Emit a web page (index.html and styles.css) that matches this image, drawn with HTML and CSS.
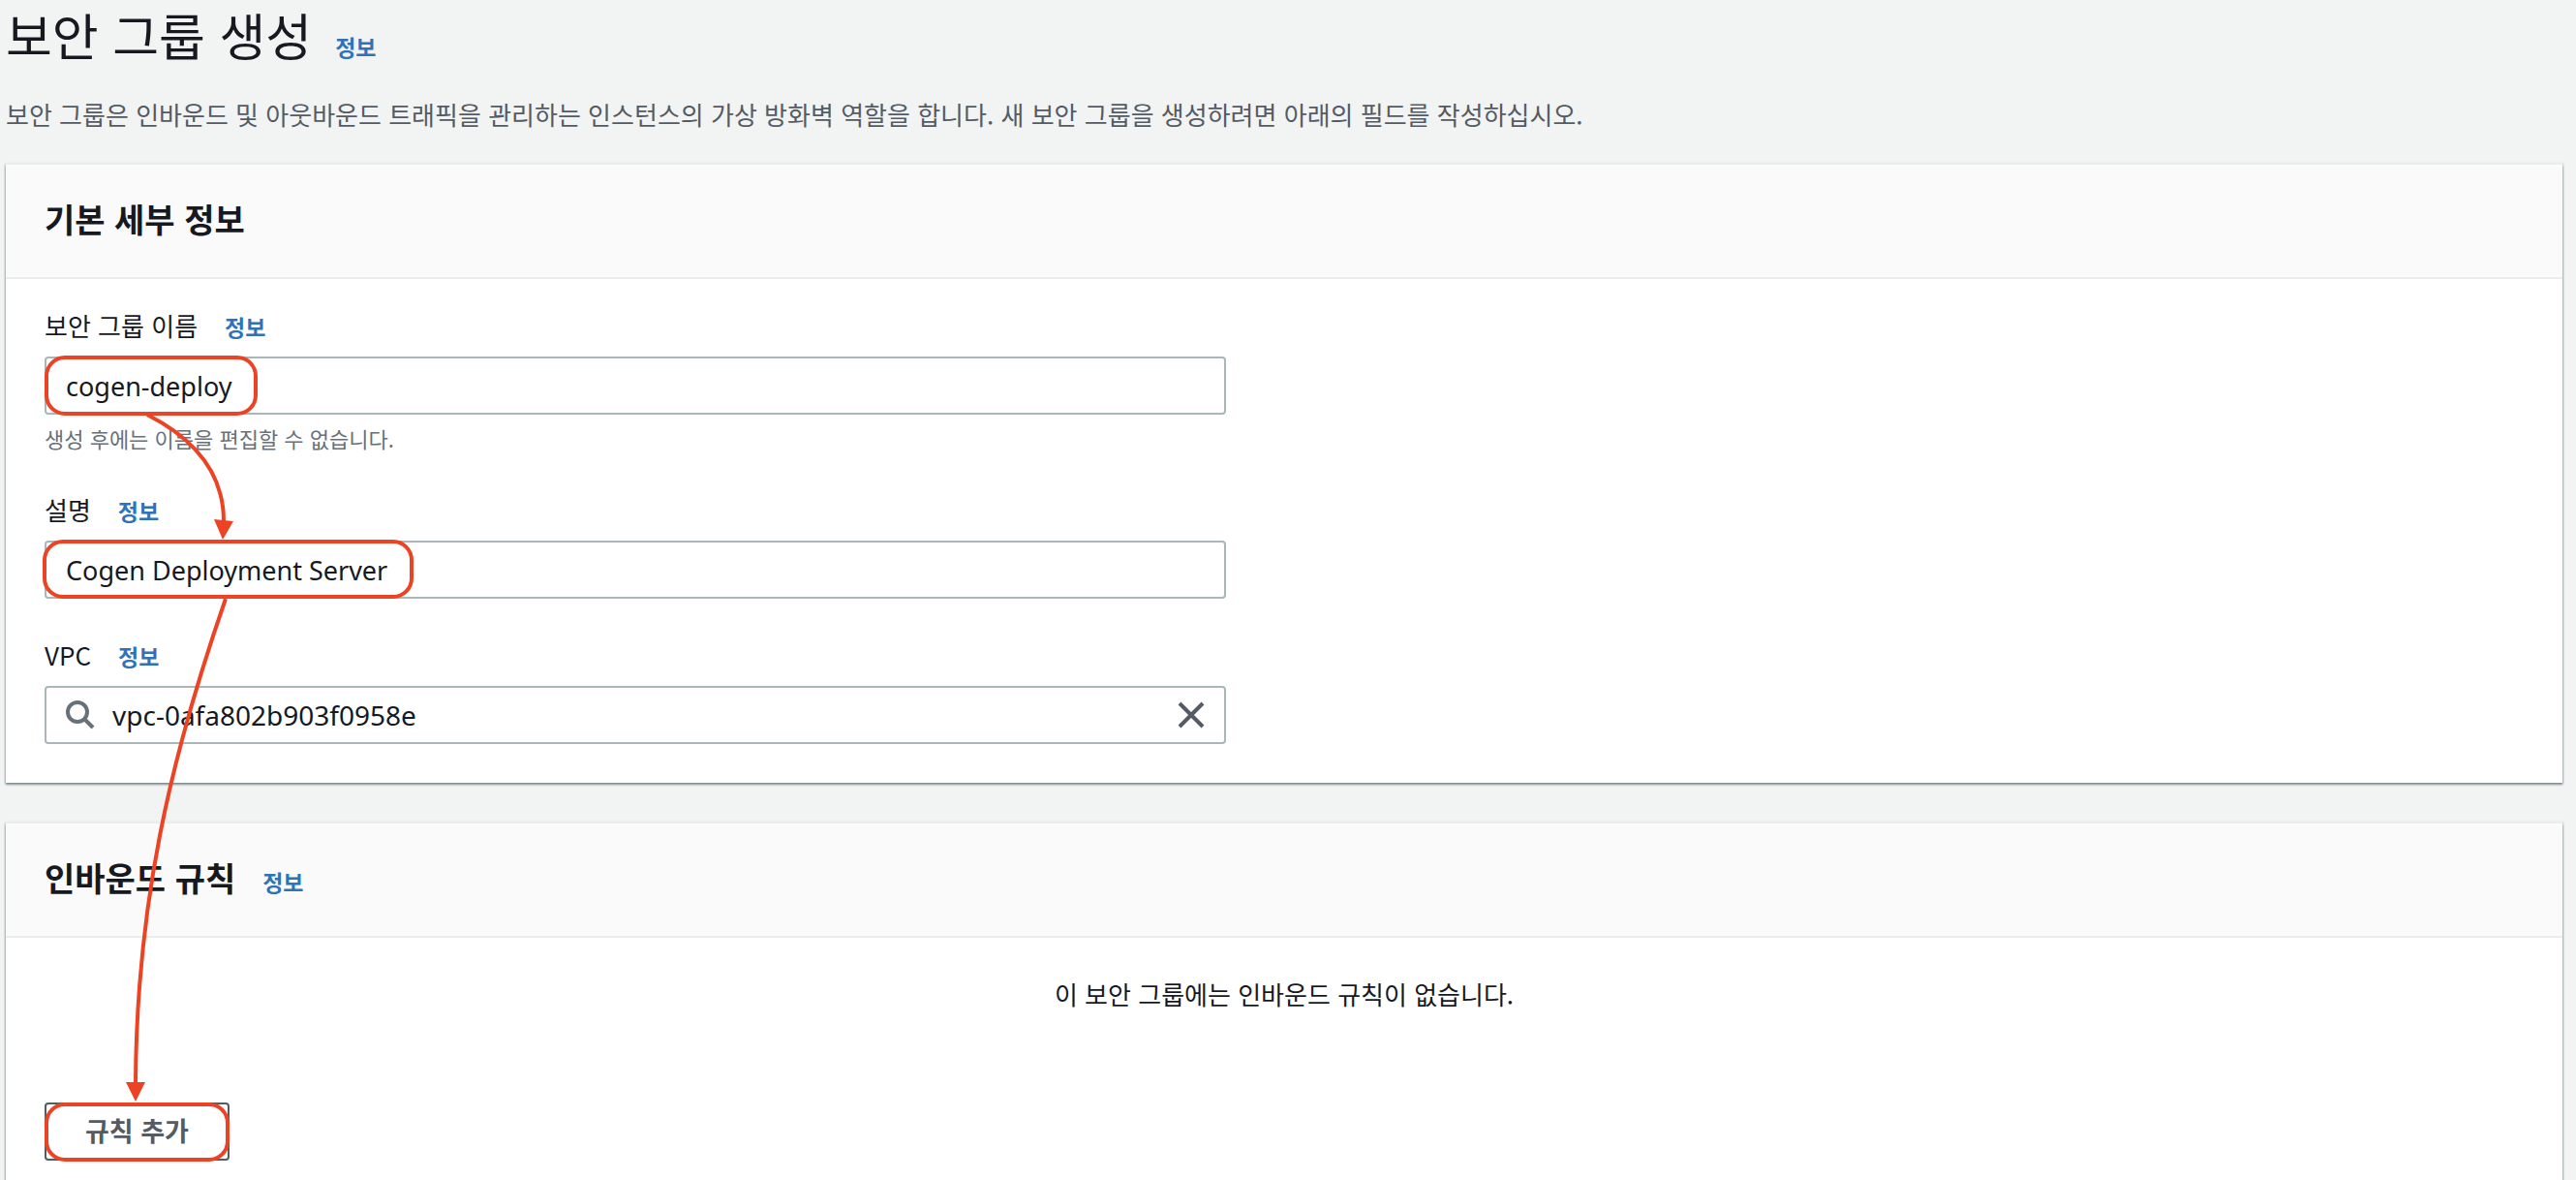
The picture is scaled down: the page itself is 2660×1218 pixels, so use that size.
FILE: index.html
```html
<!DOCTYPE html>
<html lang="ko">
<head>
  <meta charset="UTF-8">
  <meta name="viewport" content="width=device-width, initial-scale=1.0">
  <title>보안 그룹 생성</title>
  <link rel="stylesheet" href="styles.css">
</head>
<body>
<main class="page">
  <header class="page-header">
    <div class="heading">
      <h1>보안 그룹 생성</h1>
      <a class="info" href="#">정보</a>
    </div>
    <p>보안 그룹은 인바운드 및 아웃바운드 트래픽을 관리하는 인스턴스의 가상 방화벽 역할을 합니다. 새 보안 그룹을 생성하려면 아래의 필드를 작성하십시오.</p>
  </header>

  <section class="panel">
    <div class="panel-header heading">
      <h2>기본 세부 정보</h2>
    </div>
    <div class="panel-body form">
      <div class="field">
        <div class="field-label">
          <label for="groupName">보안 그룹 이름</label>
          <a class="info" href="#">정보</a>
        </div>
        <input type="text" id="groupName" value="cogen-deploy">
        <p class="hint">생성 후에는 이름을 편집할 수 없습니다.</p>
      </div>
      <div class="field">
        <div class="field-label">
          <label for="description">설명</label>
          <a class="info" href="#">정보</a>
        </div>
        <input type="text" id="description" value="Cogen Deployment Server">
      </div>
      <div class="field">
        <div class="field-label">
          <label for="vpc">VPC</label>
          <a class="info" href="#">정보</a>
        </div>
        <div class="search-box">
          <svg class="search-icon" viewBox="0 0 30 30" width="30" height="30">
            <circle cx="12" cy="12" r="10"/>
            <path d="M19 19l9 9"/>
          </svg>
          <input type="text" id="vpc" value="vpc-0afa802b903f0958e">
          <button type="button" class="clear" aria-label="지우기">
            <svg viewBox="0 0 28 28" width="28" height="28">
              <path d="M2 2l24 24M26 2L2 26"/>
            </svg>
          </button>
        </div>
      </div>
    </div>
  </section>

  <section class="panel">
    <div class="panel-header heading">
      <h2>인바운드 규칙</h2>
      <a class="info" href="#">정보</a>
    </div>
    <div class="panel-body">
      <p class="empty">이 보안 그룹에는 인바운드 규칙이 없습니다.</p>
      <button type="button" class="add-rule">규칙 추가</button>
    </div>
  </section>

  <!-- walkthrough marks over the form -->
  <svg class="marks" width="460" height="1218" viewBox="0 0 460 1218" aria-hidden="true">
    <rect x="48" y="369" width="216" height="58" rx="19"/>
    <rect x="46" y="559" width="379" height="57" rx="19"/>
    <rect x="48" y="1140" width="187" height="57" rx="19"/>
    <path d="M152 428C205 455 231 492 231 538"/>
    <path d="M233 618C175 785 141 935 140 1118"/>
    <path class="tip" d="M221 536l20 2-11 19z"/>
    <path class="tip" d="M130 1117h20l-10 20z"/>
  </svg>
</main>
</body>
</html>
```
FILE: styles.css
```css
* {
  box-sizing: border-box;
}

body {
  margin: 0;
  background: #f2f3f3;
  color: #16191f;
  font-family: "Noto Sans CJK KR", sans-serif;
  font-size: 26px;
  line-height: 40px;
}

h1, h2, p {
  margin: 0;
}

.page {
  position: relative;
  padding: 0 14px 0 6px;
}

.page-header {
  margin-bottom: 32px;
}

.page-header p {
  margin-top: 26px;
  color: #545b64;
}

.heading {
  display: flex;
  align-items: baseline;
}

h1 {
  font-size: 52px;
  font-weight: 400;
  line-height: 72px;
}

h2 {
  font-size: 34px;
  font-weight: 700;
  line-height: 44px;
}

.info {
  margin-left: 28px;
  color: #2e73b8;
  font-size: 23px;
  font-weight: 700;
  line-height: 24px;
  text-decoration: none;
}

h1 + .info {
  margin-left: 24px;
}

.panel {
  margin-bottom: 42px;
  background: #fff;
  box-shadow: 0 -2px 0 #eaeded, 0 2px 2px 0 rgba(0, 28, 36, 0.4), 0 0 2px 1px rgba(0, 28, 36, 0.2);
}

.panel-header {
  padding: 34px 40px 38px;
  background: #fafafa;
  border-bottom: 2px solid #eaeded;
}

.panel-body {
  padding: 28px 40px 40px;
}

.form {
  display: grid;
  gap: 38px;
}

.field {
  width: calc(50% - 60px);
}

.field-label {
  display: flex;
  align-items: baseline;
  margin-bottom: 12px;
}

.field-label label {
  font-family: "Noto Sans CJK KR", sans-serif;
}

input {
  display: block;
  width: 100%;
  height: 60px;
  padding: 0 20px;
  border: 2px solid #aab7b8;
  border-radius: 4px;
  background: #fff;
  color: #16191f;
  font-family: "Noto Sans", "Noto Sans CJK KR", sans-serif;
  font-size: 27px;
}

.hint {
  margin-top: 8px;
  color: #687078;
  font-size: 22px;
  line-height: 32px;
}

.search-box {
  display: flex;
  align-items: center;
  height: 60px;
  padding: 0 20px;
  border: 2px solid #aab7b8;
  border-radius: 4px;
}

.search-box input {
  flex: 1;
  height: 56px;
  padding: 0 18px;
  border: 0;
  font-size: 28px;
}

.search-icon {
  fill: none;
  stroke: #687078;
  stroke-width: 4;
}

.clear {
  display: flex;
  padding: 0;
  border: 0;
  background: none;
  stroke: #545b64;
  stroke-width: 4;
}

.empty {
  padding: 10px 0 92px;
  text-align: center;
}

.add-rule {
  display: block;
  height: 60px;
  padding: 0 40px 4px;
  border: 2px solid #545b64;
  border-radius: 4px;
  background: #fff;
  color: #545b64;
  font-family: inherit;
  font-size: 27px;
  font-weight: 700;
}

.marks {
  position: absolute;
  top: 0;
  left: 0;
  fill: none;
  stroke: #ec4325;
  stroke-width: 4;
  pointer-events: none;
}

.marks .tip {
  fill: #ec4325;
  stroke: none;
}
```
